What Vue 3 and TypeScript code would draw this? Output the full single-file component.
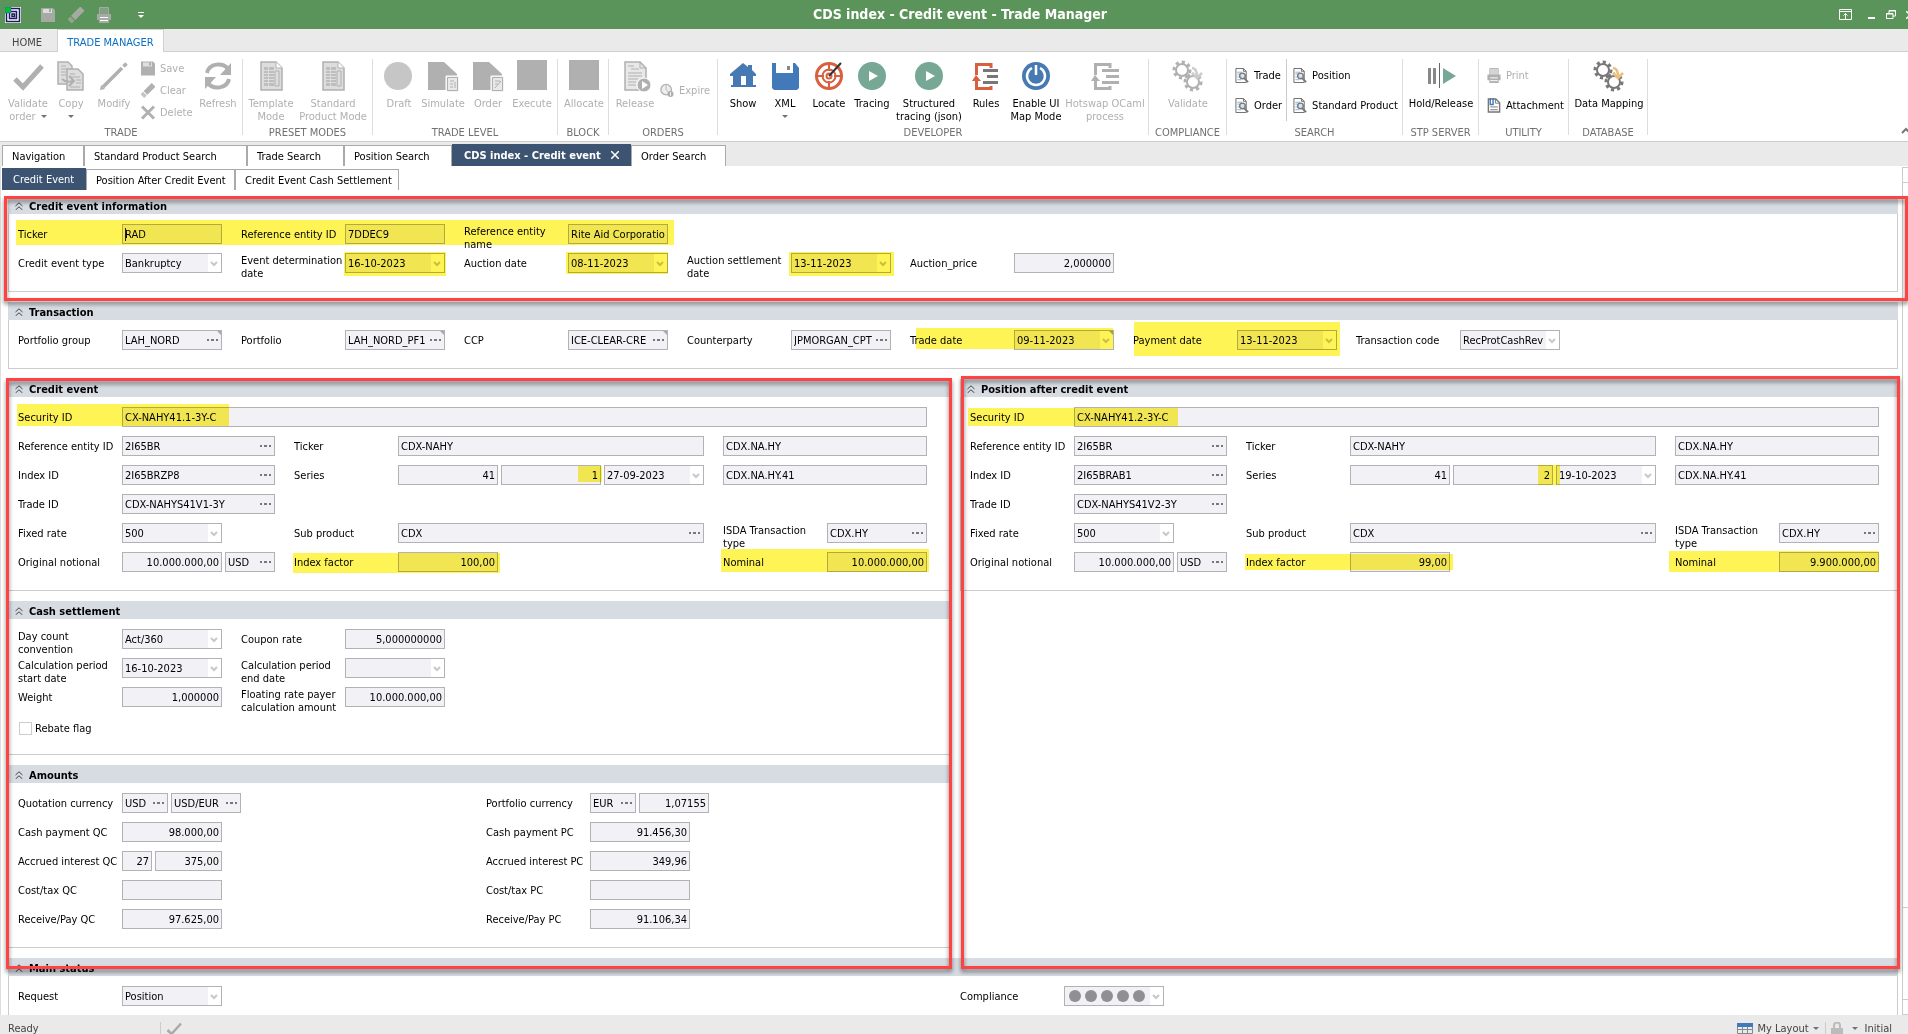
<script setup lang="ts">
type Kind = 'text' | 'num' | 'select' | 'lookup' | 'dots'
interface Field { kind: Kind; value: string; w: number; corner?: boolean; caret?: boolean }
interface Cell { label?: string; check?: string; w?: number; two?: boolean; fields: Field[] }
interface Panel { title: string; rows: Cell[][] }
interface Item { text: string; icon: string; w: number; on?: boolean; drop?: 'inline' | 'below' }
interface Small { text: string; icon: string; on?: boolean }
interface Group { title: string; w: number; items: (Item | Small[])[]; tall?: boolean }

const f = (kind: Kind, value: string, w = 100, extra: Partial<Field> = {}): Field => ({ kind, value, w, ...extra })
const cell = (label: string, ...fields: Field[]): Cell => ({ label, fields })
const wide = (label: string, w: number, ...fields: Field[]): Cell => ({ label, w, fields })
const two = (label: string, ...fields: Field[]): Cell => ({ label, two: true, fields })

const position = (title: string, version: string, indexId: string, start: string, factor: string, nominal: string): Panel => ({
  title,
  rows: [
    [cell('Security ID', f('text', `CX-NAHY41.${version}-3Y-C`, 805))],
    [cell('Reference entity ID', f('lookup', '2I65BR', 153)), cell('Ticker', f('text', 'CDX-NAHY', 306)), { fields: [f('text', 'CDX.NA.HY', 204)] }],
    [
      cell('Index ID', f('lookup', indexId, 153)),
      cell('Series', f('num', '41'), f('num', version), f('select', start)),
      { fields: [f('text', 'CDX.NA.HY.41', 204)] },
    ],
    [cell('Trade ID', f('lookup', `CDX-NAHYS41V${version}-3Y`, 153))],
    [wide('Fixed rate', 153, f('select', '500')), cell('Sub product', f('lookup', 'CDX', 306)), two('ISDA Transaction\ntype', f('lookup', 'CDX.HY'))],
    [
      cell('Original notional', f('num', '10.000.000,00'), f('lookup', 'USD', 50)),
      wide('Index factor', 306, f('num', factor)),
      cell('Nominal', f('num', nominal)),
    ],
  ],
})

const bands: Panel[][][] = [
  [[{
    title: 'Credit event information',
    rows: [
      [
        cell('Ticker', f('text', 'RAD', 100, { caret: true })),
        cell('Reference entity ID', f('text', '7DDEC9')),
        two('Reference entity\nname', f('text', 'Rite Aid Corporation')),
      ],
      [
        cell('Credit event type', f('select', 'Bankruptcy')),
        two('Event determination\ndate', f('select', '16-10-2023')),
        cell('Auction date', f('select', '08-11-2023')),
        two('Auction settlement\ndate', f('select', '13-11-2023')),
        cell('Auction_price', f('num', '2,000000')),
      ],
    ],
  }]],
  [[{
    title: 'Transaction',
    rows: [[
      cell('Portfolio group', f('lookup', 'LAH_NORD', 100, { corner: true })),
      cell('Portfolio', f('lookup', 'LAH_NORD_PF1', 100, { corner: true })),
      cell('CCP', f('lookup', 'ICE-CLEAR-CRE', 100, { corner: true })),
      cell('Counterparty', f('lookup', 'JPMORGAN_CPTY')),
      cell('Trade date', f('select', '09-11-2023', 100, { corner: true })),
      cell('Payment date', f('select', '13-11-2023')),
      cell('Transaction code', f('select', 'RecProtCashRev')),
    ]],
  }]],
  [
    [
      position('Credit event', '1', '2I65BRZP8', '27-09-2023', '100,00', '10.000.000,00'),
      {
        title: 'Cash settlement',
        rows: [
          [two('Day count\nconvention', f('select', 'Act/360')), cell('Coupon rate', f('num', '5,000000000'))],
          [two('Calculation period\nstart date', f('select', '16-10-2023')), two('Calculation period\nend date', f('select', ''))],
          [cell('Weight', f('num', '1,000000')), two('Floating rate payer\ncalculation amount', f('num', '10.000.000,00'))],
          [{ check: 'Rebate flag', fields: [] }],
        ],
      },
      {
        title: 'Amounts',
        rows: [
          [wide('Quotation currency', 345, f('lookup', 'USD', 46), f('lookup', 'USD/EUR', 70)), cell('Portfolio currency', f('lookup', 'EUR', 46), f('num', '1,07155', 70))],
          [wide('Cash payment QC', 345, f('num', '98.000,00')), cell('Cash payment PC', f('num', '91.456,30'))],
          [wide('Accrued interest QC', 345, f('num', '27', 30), f('num', '375,00', 67)), cell('Accrued interest PC', f('num', '349,96'))],
          [wide('Cost/tax QC', 345, f('num', '')), cell('Cost/tax PC', f('num', ''))],
          [wide('Receive/Pay QC', 345, f('num', '97.625,00')), cell('Receive/Pay PC', f('num', '91.106,34'))],
        ],
      },
    ],
    [position('Position after credit event', '2', '2I65BRAB1', '19-10-2023', '99,00', '9.900.000,00')],
  ],
  [[{ title: 'Main status', rows: [[wide('Request', 819, f('select', 'Position')), cell('Compliance', f('dots', ''))], [], []] }]],
]

const it = (text: string, icon: string, w: number, on = false, drop?: 'inline' | 'below'): Item => ({ text, icon, w, on, drop })
const groups: Group[] = [
  {
    title: 'TRADE', w: 243, items: [
      it('Validate\norder', 'check', 48, false, 'inline'), it('Copy', 'copy', 38, false, 'below'), it('Modify', 'pencil', 48),
      [{ text: 'Save', icon: 'save' }, { text: 'Clear', icon: 'eraser' }, { text: 'Delete', icon: 'cross' }],
      it('Refresh', 'refresh', 40),
    ],
  },
  { title: 'PRESET MODES', w: 130, items: [it('Template\nMode', 'sheet', 48), it('Standard\nProduct Mode', 'sheet', 76)] },
  { title: 'TRADE LEVEL', w: 185, items: [it('Draft', 'draft', 44), it('Simulate', 'simulate', 44), it('Order', 'order', 46), it('Execute', 'block', 42)] },
  { title: 'BLOCK', w: 51, items: [it('Allocate', 'block', 44)] },
  { title: 'ORDERS', w: 109, items: [it('Release', 'release', 44), [{ text: 'Expire', icon: 'clock' }]] },
  {
    title: 'DEVELOPER', w: 431, items: [
      it('Show', 'house', 42, true), it('XML', 'disk', 42, true, 'below'), it('Locate', 'target', 46, true), it('Tracing', 'play', 40, true),
      it('Structured\ntracing (json)', 'play', 74, true), it('Rules', 'rules', 40, true), it('Enable UI\nMap Mode', 'power', 60, true),
      it('Hotswap OCaml\nprocess', 'rules', 78),
    ],
  },
  { title: 'COMPLIANCE', w: 78, items: [it('Validate', 'gears', 70)] },
  {
    title: 'SEARCH', w: 176, tall: true, items: [
      [{ text: 'Trade', icon: 'find', on: true }, { text: 'Order', icon: 'find', on: true }],
      [{ text: 'Position', icon: 'find', on: true }, { text: 'Standard Product', icon: 'find', on: true }],
    ],
  },
  { title: 'STP SERVER', w: 76, items: [it('Hold/Release', 'hold', 68, true)] },
  { title: 'UTILITY', w: 90, tall: true, items: [[{ text: 'Print', icon: 'printer' }, { text: 'Attachment', icon: 'attach', on: true }]] },
  { title: 'DATABASE', w: 79, items: [it('Data Mapping', 'gears', 72, true)] },
]

const docTabs = [
  { text: 'Navigation', w: 82 }, { text: 'Standard Product Search', w: 163 }, { text: 'Trade Search', w: 97 },
  { text: 'Position Search', w: 108 }, { text: 'CDS index - Credit event', w: 179, active: true }, { text: 'Order Search', w: 95 },
]
const pageTabs = [
  { text: 'Credit Event', w: 84, active: true }, { text: 'Position After Credit Event', w: 149 }, { text: 'Credit Event Cash Settlement', w: 164 },
]

/* Marker strokes laid over the form: left, top, width, height */
const marks: number[][] = [
  [16, 220, 658, 25], [344, 252, 102, 24], [566, 252, 102, 22], [789, 252, 105, 24],
  [916, 328, 197, 21], [1134, 322, 206, 34], [17, 404, 212, 22], [968, 408, 210, 18],
  [293, 553, 207, 20], [578, 466, 24, 16], [721, 549, 208, 23],
  [1538, 465, 22, 20], [1245, 554, 208, 16], [1669, 551, 210, 21],
]

const isList = (x: Item | Small[]): x is Small[] => Array.isArray(x)
const px = (n: number) => ({ width: `${n}px` })
const box = (m: number[]) => ({ left: `${m[0]}px`, top: `${m[1]}px`, width: `${m[2]}px`, height: `${m[3]}px` })
</script>

<template>
  <div class="app">
    <svg class="sprite" aria-hidden="true">
      <symbol id="save" viewBox="0 0 14 14"><path fill="currentColor" d="M0 0h12l2 2v12H0z" /><path fill="#fff" opacity=".6" d="M2 1h9v4H2z" /><path fill="currentColor" d="M8 1h2v3H8z" /></symbol>
      <symbol id="eraser" viewBox="0 0 16 16"><g transform="rotate(-45 8 8)"><path fill="currentColor" opacity=".75" d="M-1 5h4v6h-4z" /><path fill="currentColor" d="M4 5h13v6H4z" /></g></symbol>
      <symbol id="cross" viewBox="0 0 14 14"><path stroke="currentColor" stroke-width="3" d="M1 1l12 12M13 1L1 13" /></symbol>
      <symbol id="printer" viewBox="0 0 14 16"><path fill="currentColor" opacity=".55" d="M3 1h8v7H3z" /><path fill="none" stroke="currentColor" d="M2.500 7V.5h9V7" /><path fill="currentColor" d="M0 7h14v6h-2v3H2v-3H0z" /><path stroke="#fff" d="M3 10.500h8M3 13.500h8" /></symbol>
      <symbol id="check" viewBox="0 0 32 32"><path fill="none" stroke="currentColor" stroke-width="5" d="M3 19l8 8L30 6" /></symbol>
      <symbol id="copy" viewBox="0 0 32 32"><g fill="#ddd" stroke="currentColor" stroke-width="1.500"><path d="M3 2h10l4 4v18H3z" /><path d="M12 9h11l5 5v16H12z" /></g><path fill="none" stroke="currentColor" d="M6 6h5M6 9h7M6 12h5M6 15h5M15 14h5M15 17h10M21 20h5M21 23h5M15 27h10" /><path fill="none" stroke="currentColor" stroke-width="2" d="M7 19q4 4 11 2M14 16l5 5-5 5" /></symbol>
      <symbol id="pencil" viewBox="0 0 32 32"><path stroke="currentColor" stroke-width="3.500" d="M5 27L24 8" /><path stroke="currentColor" stroke-width="3.500" d="M25.500 6.500l3-3" /><path fill="currentColor" d="M2 30l1-5 4 4z" /></symbol>
      <symbol id="refresh" viewBox="0 0 32 32"><g fill="none" stroke="currentColor" stroke-width="4"><path d="M5 13C7 3 21 2 26 9" /><path d="M27 19c-2 10-16 11-21 4" /></g><path fill="currentColor" d="M29 3v12H18zM3 29V17h11z" /></symbol>
      <symbol id="sheet" viewBox="0 0 32 32"><path fill="#ddd" stroke="currentColor" stroke-width="1.500" d="M6 2h15l6 6v22H6z" /><path fill="#fff" stroke="currentColor" d="M21 2v6h6" /><path fill="currentColor" opacity=".7" d="M9 7h4v19H9zM14 7h5v19h-5z" /><path stroke="#ddd" d="M9 10.500h10M9 13.500h10M9 16.500h10M9 19.500h10M9 22.500h10" /><path fill="none" stroke="currentColor" d="M20 11h4v15h-4z" /></symbol>
      <symbol id="draft" viewBox="0 0 32 32"><circle cx="15" cy="16" r="14" fill="#c6c6c6" /></symbol>
      <symbol id="simulate" viewBox="0 0 32 32"><path fill="currentColor" d="M1 2h16l13 12v16H1z" /><path fill="#e8e8e8" stroke="#fff" d="M19 16h13v16H19z" /><path fill="none" stroke="currentColor" d="M20.500 17.500h10v13h-10zM23 21h4M23 24h3M23 27h3M28 22v6" /></symbol>
      <symbol id="order" viewBox="0 0 32 32"><path fill="currentColor" d="M1 2h16l13 12v16H1z" /><path fill="#e8e8e8" stroke="#fff" d="M19 16h13v16H19z" /><path fill="none" stroke="currentColor" d="M20.500 17.500h10v13h-10zM23 21h5M23 24h3M23 28l6-7" /></symbol>
      <symbol id="block" viewBox="0 0 32 32"><path fill="currentColor" d="M1 0h30v30H1z" /></symbol>
      <symbol id="release" viewBox="0 0 32 32"><path fill="#e8e8e8" stroke="currentColor" stroke-width="1.500" d="M6 2h15l6 6v22H6z" /><path fill="none" stroke="currentColor" d="M21 2v6h6M9 6h6M12 9h8M9 13h14M9 16h14M9 19h10M9 22h8M9 25h8" /><circle cx="25" cy="25" r="7" fill="currentColor" stroke="#fff" /><path fill="#fff" d="M23 21l6 4-6 4z" /></symbol>
      <symbol id="clock" viewBox="0 0 16 16"><circle cx="7" cy="7" r="6" fill="#eee" stroke="currentColor" stroke-width="1.500" /><path fill="none" stroke="currentColor" d="M7 2v5l3 3" /><circle cx="12" cy="12" r="3.500" fill="currentColor" /><path stroke="#fff" d="M12 10v4" /></symbol>
      <symbol id="house" viewBox="0 0 32 32"><path fill="#477ab3" d="M3 14L16 3l5 4V5h4v5l4 4v2h-3v9h3v2H4v-2h2v-9H3z" /><path fill="#fff" d="M14 16h5v9h-5z" /></symbol>
      <symbol id="disk" viewBox="0 0 32 32"><path fill="#427ab9" d="M3 3h23l4 5v20l-2 2H5l-2-2z" /><path fill="#fff" d="M7 3h17v10H7z" /><path fill="#888" d="M18 6h3v4h-3z" /></symbol>
      <symbol id="target" viewBox="0 0 32 32"><g fill="none" stroke="#d9603f"><circle cx="16" cy="16" r="12.500" stroke-width="3" /><circle cx="16" cy="16" r="6.500" stroke-width="2" /><circle cx="16" cy="16" r="2.500" stroke-width="2" /><path stroke-width="2" d="M16 2v9M16 21v9M2 16h9M21 16h9" /></g><path stroke="#333" stroke-width="2" d="M16 16L28 3" /></symbol>
      <symbol id="play" viewBox="0 0 32 32"><circle cx="16" cy="16" r="14" fill="#77a795" /><path fill="#fff" d="M13 11l9 5-9 5z" /></symbol>
      <symbol id="rules" viewBox="0 0 32 32"><path fill="none" stroke="currentColor" stroke-width="3" d="M21 8V4.500H6.500V15M6.500 19v9.500H21V26" /><path fill="currentColor" d="M2 21l4-6 5 6z" /><path stroke="currentColor" stroke-width="3" d="M13 10.500h17M17 16.500h13M13 22.500h17" /></symbol>
      <symbol id="rules-on" viewBox="0 0 32 32"><path fill="none" stroke="#d9603f" stroke-width="3" d="M21 8V4.500H6.500V15M6.500 19v9.500H21V26" /><path fill="#d9603f" d="M2 21l4-6 5 6z" /><path stroke="#777" stroke-width="3" d="M13 10.500h15M17 16.500h11M13 22.500h15" /></symbol>
      <symbol id="power" viewBox="0 0 32 32"><circle cx="16" cy="16" r="14" fill="#477ab3" /><path fill="none" stroke="#fff" stroke-width="2.500" d="M12 8a9 9 0 1 0 8 0M16 5v10" /></symbol>
      <symbol id="gears" viewBox="0 0 32 32"><g fill="none" stroke="currentColor"><circle cx="10" cy="10" r="6" stroke-width="2" /><circle cx="10" cy="10" r="8" stroke-width="3" stroke-dasharray="3.100 3.100" /><circle cx="21" cy="22" r="6" stroke-width="2" /><circle cx="21" cy="22" r="8" stroke-width="3" stroke-dasharray="3.100 3.100" /></g><path fill="none" stroke="#fff" stroke-width="5" d="M20 8q5 0 5 9" /><path fill="none" stroke="#ccc" stroke-width="2.500" d="M20 8q5 0 5 9M20 13l5 5 5-5" /></symbol>
      <symbol id="gears-on" viewBox="0 0 32 32"><g fill="none" stroke="#777"><circle cx="10" cy="10" r="6" stroke-width="2" /><circle cx="10" cy="10" r="8" stroke-width="3" stroke-dasharray="3.100 3.100" /><circle cx="21" cy="22" r="6" stroke-width="2" /><circle cx="21" cy="22" r="8" stroke-width="3" stroke-dasharray="3.100 3.100" /></g><path fill="none" stroke="#fff" stroke-width="5" d="M20 8q5 0 5 9" /><path fill="none" stroke="#ecc07c" stroke-width="2.500" d="M20 8q5 0 5 9M20 13l5 5 5-5" /></symbol>
      <symbol id="find" viewBox="0 0 14 16"><path fill="#fff" stroke="#666" d="M.5.500h8l3 3v12H.5z" /><path fill="none" stroke="#8cb0d0" d="M2 4.500h5M2 6.500h3M2 9.500h3M2 12.500h4" /><path fill="none" stroke="#666" d="M8.500.500v3h3" /><circle cx="7.500" cy="8.500" r="3" fill="#d5e2ee" stroke="#777" stroke-width="1.500" /><path stroke="#777" stroke-width="2" d="M9.500 11l4 4" /></symbol>
      <symbol id="hold" viewBox="0 0 32 32"><path fill="#888" d="M3 8h3v16H3zM8 8h3v16H8z" /><path stroke="#666" d="M14.500 3v25" /><path fill="#77a795" d="M18 8l13 8-13 8z" /></symbol>
      <symbol id="attach" viewBox="0 0 14 16"><path fill="#fff" stroke="#777" stroke-width="1.500" d="M1 1h8l4 4v10H1z" /><path fill="none" stroke="#777" d="M8.500 1v4.500H13M3 9.500h8M3 12.500h8" /><path fill="none" stroke="#427ab9" stroke-width="1.500" d="M3 0v7h3V0" /></symbol>
      <symbol id="chev" viewBox="0 0 8 6"><path fill="none" stroke="#c8c8cc" stroke-width="2" d="M1 1l3 3 3-3" /></symbol>
    </svg>

    <header class="titlebar">
      <div class="quick">
        <svg class="logo" viewBox="0 0 16 16"><path fill="#fff" d="M0 0h16v16H0z" /><path fill="none" stroke="#1b1b5e" stroke-width="1.500" d="M1.500 1.500h13v13h-13zM4.500 4.500h7v7h-7zM7 7h2.500v2.500H7z" /><path fill="#00c030" stroke="#44e" stroke-width=".5" d="M0 0h6v6H0z" /></svg>
        <button type="button" class="plain" aria-label="Save"><svg width="14" height="14"><use href="#save" /></svg></button>
        <button type="button" class="plain" aria-label="Clear"><svg width="16" height="16"><use href="#eraser" /></svg></button>
        <button type="button" class="plain" aria-label="Print"><svg width="14" height="16"><use href="#printer" /></svg></button>
        <button type="button" class="plain more" aria-label="Customize"><svg width="6" height="6" viewBox="0 0 6 6"><path fill="#fff" d="M0 0h6v1H0zM0 3h6L3 6z" /></svg></button>
      </div>
      <h1>CDS index - Credit event - Trade Manager</h1>
      <div class="window">
        <button type="button" class="plain" aria-label="Ribbon display"><svg width="13" height="11" viewBox="0 0 13 11"><path fill="none" stroke="#fff" d="M.5.500h12v10H.5zM0 2.500h13M6.500 10V4.500M4.500 6.500l2-2 2 2" /></svg></button>
        <button type="button" class="plain" aria-label="Minimize"><svg width="8" height="10" viewBox="0 0 8 10"><path fill="#fff" d="M0 7h7v2H0z" /></svg></button>
        <button type="button" class="plain" aria-label="Restore"><svg width="10" height="9" viewBox="0 0 10 9"><path fill="none" stroke="#fff" d="M3 3V.500h6.500V6H7M.5 3.500H7v5H.5z" /><path stroke="#fff" d="M3 1h7M0 4h7" /></svg></button>
        <button type="button" class="plain" aria-label="Close"><svg width="8" height="8" viewBox="0 0 8 8"><path stroke="#fff" stroke-width="1.500" d="M0 0l8 8M8 0L0 8" /></svg></button>
      </div>
    </header>

    <nav class="ribbon-tabs">
      <button type="button" class="plain">HOME</button>
      <button type="button" class="plain current">TRADE MANAGER</button>
    </nav>

    <section class="ribbon">
      <div v-for="g in groups" :key="g.title" class="group" :class="{ tall: g.tall }" :style="px(g.w)">
        <div class="tools">
          <template v-for="(x, i) in g.items" :key="i">
            <div v-if="isList(x)" class="stack">
              <button v-for="s in x" :key="s.text" type="button" class="small" :disabled="!s.on">
                <svg><use :href="'#' + s.icon" /></svg>{{ s.text }}
              </button>
            </div>
            <button v-else type="button" class="big" :disabled="!x.on" :style="px(x.w)">
              <svg><use :href="'#' + x.icon + (x.on && ['rules', 'gears'].includes(x.icon) ? '-on' : '')" /></svg>
              <span>{{ x.text }}<i v-if="x.drop" class="tri" :class="x.drop"></i></span>
            </button>
          </template>
        </div>
        <div class="caption">{{ g.title }}</div>
      </div>
      <button type="button" class="plain collapse" aria-label="Collapse ribbon"><svg width="10" height="7" viewBox="0 0 10 7"><path fill="none" stroke="#777" stroke-width="2" d="M1 6l4-4 4 4" /></svg></button>
    </section>

    <nav class="doc-tabs">
      <button v-for="t in docTabs" :key="t.text" type="button" class="tab" :class="{ active: t.active }" :style="px(t.w)">
        {{ t.text }}<svg v-if="t.active" width="8" height="8" viewBox="0 0 8 8"><path stroke="#fff" stroke-width="1.500" d="M0 0l8 8M8 0L0 8" /></svg>
      </button>
    </nav>

    <div class="page">
      <main>
        <nav class="page-tabs">
          <button v-for="t in pageTabs" :key="t.text" type="button" class="tab" :class="{ active: t.active }" :style="px(t.w)">{{ t.text }}</button>
        </nav>
        <div v-for="(band, b) in bands" :key="b" class="band" :class="{ split: band.length > 1 }">
          <div v-for="(column, c) in band" :key="c" class="column">
            <section v-for="p in column" :key="p.title" class="panel">
              <h2><svg width="8" height="8" viewBox="0 0 8 8"><path fill="none" stroke="#444" d="M.5 4L4 .8 7.500 4M.5 8L4 4.800 7.500 8" /></svg>{{ p.title }}</h2>
              <div class="body">
                <div v-for="(row, r) in p.rows" :key="r" class="row">
                  <div v-for="(k, n) in row" :key="n" class="cell">
                    <label v-if="k.check" class="check"><input type="checkbox">{{ k.check }}</label>
                    <label v-if="k.label" class="name" :class="{ two: k.two }" :for="`f${b}${c}${p.title[1]}${r}${n}0`">{{ k.label }}</label>
                    <div class="controls" :style="k.w ? px(k.w) : {}">
                      <div v-for="(x, m) in k.fields" :key="m" class="field" :class="[x.kind, { corner: x.corner }]" :style="px(x.w)">
                        <template v-if="x.kind === 'select' || x.kind === 'dots'">
                          <select :id="`f${b}${c}${p.title[1]}${r}${n}${m}`" :aria-label="k.label"><option>{{ x.value }}</option></select>
                          <svg class="arrow"><use href="#chev" /></svg>
                          <svg v-if="x.kind === 'dots'" class="lights" viewBox="0 0 78 12"><circle v-for="d in 5" :key="d" :cx="d * 16 - 10" cy="6" r="6" fill="#8f8f94" /></svg>
                        </template>
                        <template v-else>
                          <input :id="`f${b}${c}${p.title[1]}${r}${n}${m}`" type="text" :value="x.value" :aria-label="k.label || 'Index name'" readonly>
                          <button v-if="x.kind === 'lookup'" type="button" class="plain" aria-label="Browse"><svg width="11" height="2" viewBox="0 0 11 2"><path fill="#777" d="M0 0h2v2H0zM4 0h3v2H4zM9 0h2v2H9z" /></svg></button>
                        </template>
                        <i v-if="x.caret" class="caret"></i>
                      </div>
                    </div>
                  </div>
                </div>
              </div>
            </section>
          </div>
        </div>
      </main>
      <div class="scroll"><i class="end"></i><i class="thumb"></i><i class="end last"></i></div>
    </div>

    <footer>
      <span class="ready">Ready</span>
      <svg class="tick" width="16" height="14" viewBox="0 3 32 28"><use href="#check" width="32" height="32" /></svg>
      <button type="button" class="plain layout"><svg width="16" height="11" viewBox="0 0 16 11"><path fill="#e4ecf4" stroke="#888" d="M.5.500h15v10H.5zM0 6.500h16M5.500 4v6M10.500 4v6" /><path fill="#427ab9" d="M0 0h16v4H0z" /></svg>My Layout<i class="tri"></i></button>
      <button type="button" class="plain lock" aria-label="Lock"><svg width="12" height="13" viewBox="0 0 12 13"><path fill="none" stroke="#bbb" stroke-width="2" d="M3 6V3.500a3 3 0 0 1 6 0V6" /><path fill="#bbb" d="M0 6h12v7H0z" /></svg><i class="tri"></i></button>
      <span class="initial">Initial</span>
    </footer>

    <i v-for="(m, i) in marks" :key="i" class="mark" :style="box(m)"></i>
    <i class="frame info"></i>
    <i class="frame before"></i>
    <i class="frame after"></i>
  </div>
</template>

<style>
body { margin: 0; }
</style>

<style scoped>
.app {
  position: relative;
  display: flex;
  flex-direction: column;
  height: 100vh;
  overflow: hidden;
  background: #fff;
  color: #000;
  font: 11px/13px "DejaVu Sans Condensed", "Noto Sans", sans-serif;
}
* { box-sizing: border-box; }
button, input, select { font: inherit; color: inherit; margin: 0; }
svg { flex: none; }
.sprite { position: absolute; width: 0; height: 0; }
.plain { display: flex; align-items: center; padding: 0; border: 0; background: none; }

.titlebar { flex: none; display: flex; height: 29px; background: #5a945a; color: #fff; overflow: hidden; }
.quick, .window { display: flex; align-items: center; flex: 0 0 160px; color: #a5aaa5; }
.quick { padding-left: 5px; gap: 13px; }
.logo { width: 16px; height: 16px; margin-right: 7px; }
.more { margin-left: 14px; }
.titlebar h1 { flex: 1; margin: 0; padding-left: 6px; text-align: center; font-size: 14px; line-height: 28px; }
.window { justify-content: flex-end; gap: 10px; margin-right: -6px; }
.window button:first-child { margin-right: 6px; }

.ribbon-tabs { flex: none; display: flex; height: 23px; background: #eaeaea; box-shadow: inset 0 -1px #d0d0d0; color: #444; }
.ribbon-tabs button { width: 57px; justify-content: center; padding: 3px 3px 0 0; }
.ribbon-tabs .current { width: 107px; padding: 2px 0 0; background: #fff; border: 1px solid #d0d0d0; border-bottom: 0; color: #0a6fc2; }

.ribbon { flex: none; display: flex; height: 90px; border-bottom: 1px solid #ccc; padding-top: 7px; }
.group { flex: none; height: 76px; border-right: 1px solid #ddd; padding-left: 4px; }
.tools { display: flex; height: 67px; }
.caption { margin-left: -4px; text-align: center; color: #707070; }
.big { flex: none; display: flex; flex-direction: column; align-items: center; padding: 0; border: 0; background: none; text-align: center; }
.big svg { width: 32px; height: 32px; margin: 1px 0 5px; }
.big span { white-space: pre; }
button:disabled { color: #b0b0b0; }
.tri { display: inline-block; border: 3px solid transparent; border-top-color: #6c7280; border-bottom: 0; vertical-align: 2px; }
.tri.inline { margin-left: 5px; }
.tri.below { display: block; width: 0; margin: 5px auto 0; }
.stack { display: flex; flex-direction: column; width: 60px; height: 66px; margin-top: -2px; padding-left: 3px; }
.small { display: flex; align-items: center; flex: 0 0 22px; gap: 5px; padding: 0; border: 0; background: none; white-space: nowrap; }
.small svg { width: 14px; height: 15px; }
.stack .small:only-child { margin-top: 22px; }
.tall .stack { width: auto; margin-top: 0; padding: 1px 4px 0; }
.tall .stack + .stack { height: 62px; border-left: 1px solid #ccc; padding-left: 6px; }
.tall .small { flex-basis: 30px; }
.collapse { margin: 60px -3px 0 auto; }

.doc-tabs { flex: none; display: flex; align-items: flex-end; height: 24px; padding-left: 2px; background: #eaeaea; }
.tab { flex: none; height: 21px; padding: 0 0 0 9px; border: 1px solid #aaa; border-width: 1px 1px 0 1px; background: #fff; text-align: left; white-space: nowrap; }
.tab.active { border: 0; background: #3d5372; color: #fff; }
.doc-tabs .active { height: 22px; padding-left: 12px; font-weight: bold; }
.doc-tabs .active svg { margin-left: 10px; }
.page-tabs { display: flex; height: 28px; margin-bottom: 2px; padding: 3px 0 4px 1px; }
.page-tabs .active { height: 22px; margin-top: -1px; padding-left: 11px; }

.page { flex: 1; display: flex; min-height: 0; }
main { flex: 1; min-width: 0; overflow: hidden; border-left: 1px solid #ddd; padding-right: 4px; }
.band { margin: 0 0 10px 7px; }
.band.split { display: grid; grid-template-columns: 942fr 938fr; gap: 10px; }
.column { display: flex; flex-direction: column; gap: 10px; min-width: 0; }
.panel h2 { display: flex; align-items: center; gap: 6px; height: 18px; margin: 0; padding: 2px 0 0 7px; background: #d7dce3; font-size: 11px; }
.body { display: grid; gap: 9px; padding: 10px 0 18px 9px; border: 1px solid #ccc; border-top: 0; }
.row { display: flex; gap: 19px; height: 20px; }
.cell { flex: none; display: flex; }
.name { width: 104px; height: 20px; padding-top: 4px; white-space: pre; }
.name.two { padding-top: 1px; }
.controls { display: flex; gap: 3px; }
.field { position: relative; display: flex; height: 20px; border: 1px solid #b2b2b4; background: #f1f1f6; }
.field input { flex: 1; width: 0; min-width: 0; padding: 0 2px; border: 0; background: none; outline: 0; }
.num input { text-align: right; }
.lookup input { padding-right: 0; }
.lookup button { width: 18px; justify-content: center; }
.field select { width: 100%; padding: 0 0 0 2px; border: 0; background: linear-gradient(to left, #fff 13px, transparent 13px); appearance: none; outline: 0; }
.arrow { position: absolute; right: 3px; top: 7px; width: 8px; height: 6px; pointer-events: none; }
.lights { position: absolute; left: 4px; top: 3px; width: 78px; height: 12px; pointer-events: none; }
.corner::after { content: ""; position: absolute; right: 0; top: 0; border: 2px solid #aaa; border-left-color: transparent; border-bottom-color: transparent; }
.caret { position: absolute; left: 2px; top: 3px; width: 1px; height: 13px; background: #222; }
.check { display: flex; align-items: center; gap: 3px; height: 20px; padding: 5px 0 0 1px; }
.check input { width: 13px; height: 13px; border: 1px solid #ccc; appearance: none; background: #fff; }

.scroll { flex: 0 0 6px; display: flex; flex-direction: column; margin-top: 1px; border-left: 1px solid #ccc; }
.end { height: 16px; border: 1px solid #ccc; border-width: 1px 0; }
.thumb { height: 725px; border-bottom: 1px solid #ccc; }
.last { margin-top: auto; }

footer { flex: none; display: flex; height: 19px; padding: 7px 16px 0 8px; background: #eaeaea; color: #444; overflow: hidden; white-space: nowrap; }
.ready { width: 153px; border-right: 1px solid #ccc; }
.tick { margin: 0 auto 0 5px; color: #aaa; }
.layout { gap: 4px; height: 13px; padding-right: 6px; border-right: 1px solid #ccc; }
.lock { gap: 9px; height: 13px; padding: 0 7px 0 5px; }

.mark, .frame { position: absolute; pointer-events: none; }
.mark { background: #fff455; mix-blend-mode: multiply; }
.frame { border: 3px solid #ff4242; filter: drop-shadow(0 3px 2px rgba(0, 0, 0, .5)); }
.info { left: 4px; right: 0; top: 196px; height: 105px; }
.before { left: 6px; width: 946px; top: 378px; height: 591px; }
.after { left: 961px; right: 8px; top: 376px; height: 593px; }
</style>
